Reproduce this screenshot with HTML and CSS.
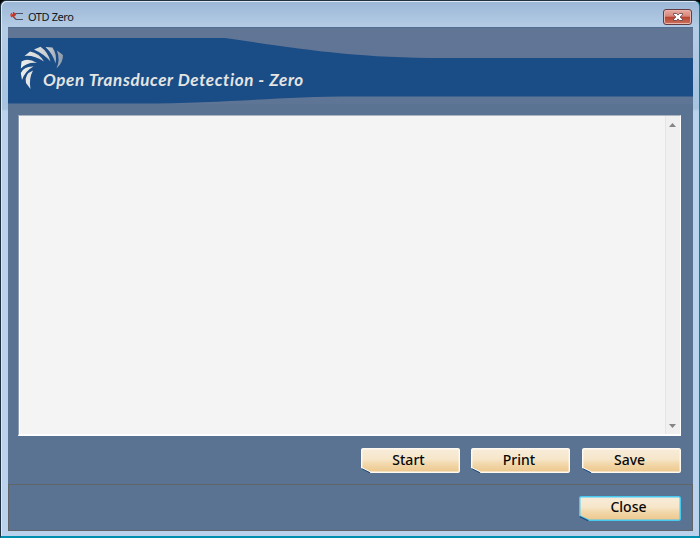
FILE: index.html
```
<!DOCTYPE html>
<html lang="en">
<head>
<meta charset="utf-8">
<title>OTD Zero</title>
<link rel="stylesheet" href="styles.css">
</head>
<body>
<div class="window">
  <header class="titlebar">
    <svg class="app-icon" width="14" height="12" viewBox="0 0 14 12"><path d="M13 2.5H6L3 5.500l3 3h7" fill="none" stroke="#4c5367" stroke-width="1.2"/><path d="M1 2l4 5M1 6l4-4M3.500 1v5M0 4h6" stroke="#d5301b" stroke-width="1.1"/></svg>
    <span class="window-title">OTD Zero</span>
    <button class="window-close" aria-label="Close window"><svg width="10" height="8" viewBox="0 0 10 8"><path d="M.5.5h3L5 2.1 6.5.5h3v1.3L7.1 4l2.4 2.2v1.3h-3L5 5.9 3.5 7.5h-3V6.2L2.9 4 .5 1.8z" fill="#fff" stroke="#583c43" stroke-width=".8"/></svg></button>
  </header>
  <main class="client">
    <div class="banner">
      <svg class="banner-wave" width="685" height="76" viewBox="0 0 685 76"><path d="M0 10H217C292 21 345 30 435 30H685V68.500H345C270 68.500 220 75.500 132 75.500H0z" fill="#1a4c86"/></svg>
      <svg class="logo" width="45" height="45" viewBox="0 0 45 45">
        <defs><linearGradient id="metal" gradientUnits="userSpaceOnUse" x1="0" x2="44"><stop offset="0" stop-color="#efefec"/><stop offset=".6" stop-color="#cbd0d3"/><stop offset="1" stop-color="#8595a8"/></linearGradient></defs>
        <g fill="url(#metal)">
          <path d="M10.500 43L6 37Q4 28 13 24.500Q8.500 33 10.500 43z"/>
          <path d="M2 34L.8 27Q4 20 13.500 20.500Q5 25 2 34z"/>
          <path d="M.8 22.500L1.500 15.500Q8 11.500 17 17Q7 16 .8 22.500z"/>
          <path d="M4.500 10L10 5.500Q19 7 24 15.500Q14 9 4.500 10z"/>
          <path d="M14 3.500L20.500.8Q28 6 30.500 15.500Q24 8 14 3.500z"/>
          <path d="M25.500 1L32.500 1.500Q37.500 9 35.500 17.500Q33 8 25.500 1z"/>
          <path d="M37 4.500L43 9Q43.500 16 36.500 22.500Q40.500 14 37 4.500z"/>
        </g>
      </svg>
      <h1 class="banner-title">Open Transducer Detection - Zero</h1>
    </div>
    <section class="report">
      <div class="report-text"></div>
      <div class="scrollbar"><svg width="7" height="4" viewBox="0 0 7 4"><path d="M0 4L3.5 0 7 4z" fill="#858585"/></svg><svg width="7" height="4" viewBox="0 0 7 4"><path d="M0 0h7L3.5 4z" fill="#858585"/></svg></div>
    </section>
    <div class="actions">
      <button class="button"><svg class="face" viewBox="0 0 99 25" preserveAspectRatio="none"><defs><linearGradient id="cream" x2="0" y2="1"><stop stop-color="#f8eddb"/><stop offset=".45" stop-color="#f6e6c9"/><stop offset=".6" stop-color="#f2dab0"/><stop offset="1" stop-color="#edc78b"/></linearGradient></defs><path d="M2 .7H97Q98.3.7 98.3 2V23Q98.3 24.3 97 24.3H10L.7 20V2Q.7.7 2 .7z" fill="url(#cream)"/><path d="M.5 20.5L9 24.7" class="notch"/></svg><span>Start</span></button>
      <button class="button"><svg class="face" viewBox="0 0 99 25" preserveAspectRatio="none"><path d="M2 .7H97Q98.3.7 98.3 2V23Q98.3 24.3 97 24.3H10L.7 20V2Q.7.7 2 .7z" fill="url(#cream)"/><path d="M.5 20.5L9 24.7" class="notch"/></svg><span>Print</span></button>
      <button class="button"><svg class="face" viewBox="0 0 99 25" preserveAspectRatio="none"><path d="M2 .7H97Q98.3.7 98.3 2V23Q98.3 24.3 97 24.3H10L.7 20V2Q.7.7 2 .7z" fill="url(#cream)"/><path d="M.5 20.5L9 24.7" class="notch"/></svg><span>Save</span></button>
    </div>
    <footer class="footer">
      <button class="button button-default"><svg class="face" viewBox="0 0 99 25" preserveAspectRatio="none"><path d="M2 .7H97Q98.3.7 98.3 2V23Q98.3 24.3 97 24.3H10L.7 20V2Q.7.7 2 .7z" fill="url(#cream)"/><path d="M.5 20.5L9 24.7" class="notch"/></svg><span>Close</span></button>
    </footer>
  </main>
</div>
</body>
</html>
```
FILE: styles.css
```
* { box-sizing: border-box; }
body { margin: 0; background: #000; overflow: hidden; }
button { border: 0; padding: 0; background: none; }
svg { display: block; }
.window {
  width: 700px;
  height: 538px;
  padding: 0 6px 5px 7px;
  border: 1px solid #20323f;
  border-right-color: #087e93;
  border-bottom: 2px solid #008faf;
  border-radius: 6px 6px 0 0;
  background: linear-gradient(#9bb7d6, #b5cce5 27px, #a7c3df 108px, #bad2ec 110px);
  box-shadow: inset 1px 1px #dce7f3;
}
.titlebar {
  display: flex;
  align-items: flex-start;
  height: 26px;
  padding: 8px 1px 0 2px;
}
.app-icon { margin-top: 2px; }
.window-title {
  flex: 1;
  margin: 1px 0 0 4px;
  font: 11px/14px "Noto Sans", sans-serif;
  letter-spacing: -.4px;
  color: #101820;
}
.window-close {
  display: flex;
  align-items: center;
  justify-content: center;
  width: 29px;
  height: 16px;
  border: 1px solid #633c43;
  border-radius: 3px;
  background: linear-gradient(#e9aaa0, #d98678 45%, #b84331 50%, #cc705c);
  box-shadow: inset 0 0 0 1px #e7b5ab;
}
.client {
  display: flex;
  flex-direction: column;
  height: 504px;
  background: #5b7393;
  border-top: 1px solid #526d92;
}
.banner {
  display: grid;
  flex: 0 0 76px;
  background: linear-gradient(#617595, #5f7596);
}
.banner > * { grid-area: 1 / 1; }
.logo { margin: 18px 0 0 12px; }
.banner-title {
  margin: 42px 0 0 35px;
  font: italic 700 17px/20px Lato, sans-serif;
  letter-spacing: .62px;
  white-space: nowrap;
  color: #e4e4e3;
}
.report {
  display: flex;
  flex: 0 0 321px;
  margin: 11px 12px 0 10px;
  border: 1px solid #fff;
  border-top-color: #abb5c1;
  border-left-color: #8d9db3;
  border-bottom-width: 2px;
  background: #f4f4f4;
}
.report-text { flex: 1; border-left: 1px solid #fff; }
.scrollbar {
  display: flex;
  flex-direction: column;
  align-items: center;
  justify-content: space-between;
  width: 15px;
  padding: 7px 1px 6px 0;
  border-left: 1px solid #e5e5e5;
  background: #f0f0f0;
}
.actions {
  display: flex;
  gap: 11.5px;
  justify-content: flex-end;
  height: 48px;
  padding: 12px 12.5px 0;
}
.button {
  display: grid;
  width: 99px;
  height: 25px;
  font: 500 14px/22px "Noto Sans", sans-serif;
  letter-spacing: 0;
  color: #080808;
}
.button > * { grid-area: 1 / 1; }
.button > span { z-index: 1; padding: 1px 3px 0 0; }
.button-default > span { padding-top: 0; }
.face {
  width: 100%;
  height: 25px;
  stroke: #fffaf0;
  stroke-width: 1.4;
  filter: drop-shadow(0 0 .5px #3e526b);
}
.notch { stroke: #1b4a7b; stroke-width: 1; }
.footer {
  display: flex;
  flex: 1;
  justify-content: flex-end;
  padding: 11px 11px 0;
  border: 1px solid #626568;
}
.button-default { width: 102px; }
.button-default .face > path:not(.notch) { stroke: #48c9f0; }
```
